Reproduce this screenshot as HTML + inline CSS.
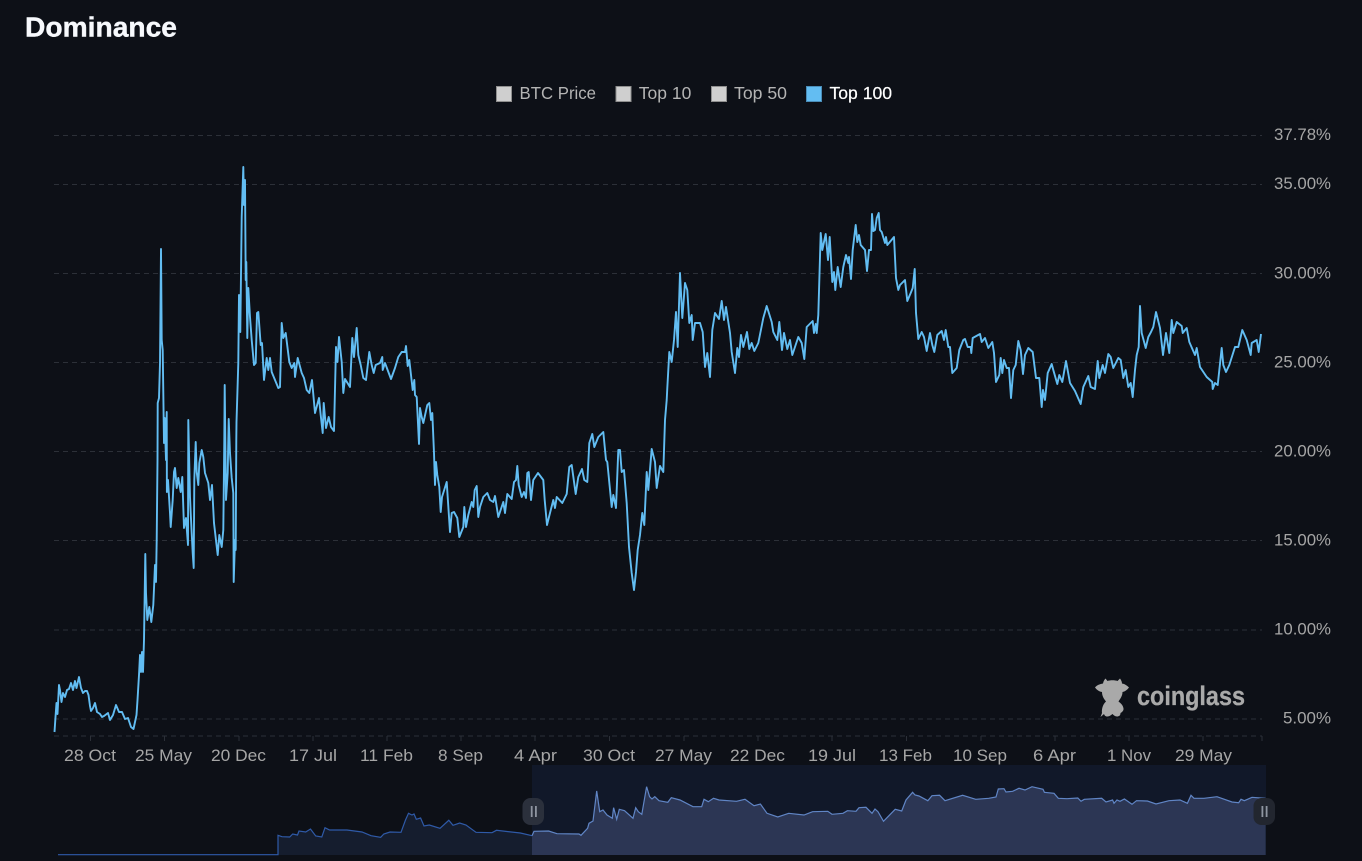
<!DOCTYPE html>
<html lang="en"><head><meta charset="utf-8"><title>Dominance</title>
<style>
html,body{margin:0;padding:0;background:#0d1017;width:1362px;height:861px;overflow:hidden}
svg{display:block}
text{font-family:"Liberation Sans",sans-serif}
</style></head><body>
<svg width="1362" height="861" viewBox="0 0 1362 861" xmlns="http://www.w3.org/2000/svg">
<rect width="1362" height="861" fill="#0d1017"/>
<text x="25" y="36.5" font-size="28" font-weight="700" fill="#f7f9fd" stroke="#f7f9fd" stroke-width=".4" textLength="152" lengthAdjust="spacingAndGlyphs">Dominance</text>

<!-- legend -->
<g stroke-width="1">
<rect x="496.5" y="86.5" width="15" height="15" fill="#cfcfcf" stroke="#8f8f8f"/>
<rect x="616" y="86.5" width="15" height="15" fill="#cfcfcf" stroke="#8f8f8f"/>
<rect x="711.5" y="86.5" width="15" height="15" fill="#cfcfcf" stroke="#8f8f8f"/>
<rect x="806.5" y="86.5" width="15" height="15" fill="#63bdf2" stroke="#4a8db8"/>
</g>
<g font-size="17.500">
<text x="519.5" y="99" fill="#b4b4b4" textLength="76.5" lengthAdjust="spacingAndGlyphs">BTC Price</text>
<text x="638.8" y="99" fill="#b4b4b4" textLength="52.5" lengthAdjust="spacingAndGlyphs">Top 10</text>
<text x="734" y="99" fill="#b4b4b4" textLength="53" lengthAdjust="spacingAndGlyphs">Top 50</text>
<text x="829.5" y="99" fill="#ffffff" stroke="#ffffff" stroke-width=".2" textLength="62.5" lengthAdjust="spacingAndGlyphs">Top 100</text>
</g>

<!-- grid -->
<g stroke="#2c3038" stroke-width="1" stroke-dasharray="5 4" fill="none">
<path d="M54 135.5H1262"/><path d="M54 184.5H1262"/><path d="M54 273.5H1262"/><path d="M54 362.5H1262"/>
<path d="M54 451.5H1262"/><path d="M54 540.5H1262"/><path d="M54 630H1262"/><path d="M54 719H1262"/><path d="M54 736H1262"/>
</g>
<g stroke="#2c3038" stroke-width="1">
<path d="M90.5 736v5M164.5 736v5M239 736v5M313 736v5M387 736v5M461 736v5M535 736v5M609.5 736v5M684 736v5M758 736v5M832 736v5M906.5 736v5M981 736v5M1055 736v5M1129 736v5M1203 736v5M1262 736v5"/>
</g>

<!-- y labels -->
<g font-size="17" fill="#a6a6a6">
<text x="1274" y="140" textLength="57" lengthAdjust="spacingAndGlyphs">37.78%</text>
<text x="1274" y="189" textLength="57" lengthAdjust="spacingAndGlyphs">35.00%</text>
<text x="1274" y="278.500" textLength="57" lengthAdjust="spacingAndGlyphs">30.00%</text>
<text x="1274" y="367.500" textLength="57" lengthAdjust="spacingAndGlyphs">25.00%</text>
<text x="1274" y="456.500" textLength="57" lengthAdjust="spacingAndGlyphs">20.00%</text>
<text x="1274" y="545.500" textLength="57" lengthAdjust="spacingAndGlyphs">15.00%</text>
<text x="1274" y="634.500" textLength="57" lengthAdjust="spacingAndGlyphs">10.00%</text>
<text x="1283" y="723.500" textLength="48" lengthAdjust="spacingAndGlyphs">5.00%</text>
</g>
<!-- x labels -->
<g font-size="17" fill="#a6a6a6">
<text x="64" y="761" textLength="52" lengthAdjust="spacingAndGlyphs">28 Oct</text>
<text x="135" y="761" textLength="57" lengthAdjust="spacingAndGlyphs">25 May</text>
<text x="211" y="761" textLength="55" lengthAdjust="spacingAndGlyphs">20 Dec</text>
<text x="289" y="761" textLength="48" lengthAdjust="spacingAndGlyphs">17 Jul</text>
<text x="360" y="761" textLength="53" lengthAdjust="spacingAndGlyphs">11 Feb</text>
<text x="438" y="761" textLength="45" lengthAdjust="spacingAndGlyphs">8 Sep</text>
<text x="514" y="761" textLength="43" lengthAdjust="spacingAndGlyphs">4 Apr</text>
<text x="583" y="761" textLength="52" lengthAdjust="spacingAndGlyphs">30 Oct</text>
<text x="655" y="761" textLength="57" lengthAdjust="spacingAndGlyphs">27 May</text>
<text x="730" y="761" textLength="55" lengthAdjust="spacingAndGlyphs">22 Dec</text>
<text x="808" y="761" textLength="48" lengthAdjust="spacingAndGlyphs">19 Jul</text>
<text x="879" y="761" textLength="53" lengthAdjust="spacingAndGlyphs">13 Feb</text>
<text x="953" y="761" textLength="54" lengthAdjust="spacingAndGlyphs">10 Sep</text>
<text x="1033" y="761" textLength="43" lengthAdjust="spacingAndGlyphs">6 Apr</text>
<text x="1107" y="761" textLength="44" lengthAdjust="spacingAndGlyphs">1 Nov</text>
<text x="1175" y="761" textLength="57" lengthAdjust="spacingAndGlyphs">29 May</text>
</g>

<!-- watermark -->
<path fill="#a9a9a9" d="M1095 687.500C1097 685 1100 684 1103 683.500C1103.500 681 1104.500 679.500 1105.500 678.500L1107.500 681C1110 680 1115 680 1117.500 681L1120 678.500C1121 680 1122 681.500 1122 683.500C1125 684 1127 685.500 1129 687.500C1127 690 1125 691.500 1122.500 692C1122.500 696 1120 699 1118.500 701.500C1120.500 703 1123 705 1123.500 708.500C1123.800 711 1121.500 712.500 1120.500 713C1120.500 715.500 1119 716.500 1117 716.500C1115 716.500 1113.500 715 1112.500 714C1111 715 1109.500 716.500 1107.500 716.500C1105.500 716.500 1104.500 715.500 1104 714L1100.500 717L1102 713C1101.500 710 1102.500 704.500 1106 701.500C1104 699 1102 696 1102 692C1099 691.500 1097 690 1095 687.500Z"/>
<text x="1137" y="705" font-size="26.500" font-weight="700" fill="#a9a9a9" stroke="#a9a9a9" stroke-width=".3" textLength="108" lengthAdjust="spacingAndGlyphs">coinglass</text>

<!-- main series -->
<polyline fill="none" stroke="#62bdf2" stroke-width="1.900" stroke-linejoin="round" points="54.500,732 55.500,717 56.500,703 57.500,714 59,685 60,690 61.500,702 63,693 65,697 67,690 69,689 71,683 73,690 75,681 76.500,688 79,677 81,688 83,693 85,691 87,691 88.500,695 90,706 91,711 93,708 95,703 97,712 100,714 102,717 104,716 108,713 110,720 113,715 116,705 119,712 122,712 125,719 128,718 131,727 133.500,729 136.500,715 137.500,700 139,675 140,655 141,672 142,652 143,672 144,640 145.300,554 146,593 147.300,620 149.300,607 151.300,622 153.300,605 155,565 156,582 156.700,540 157.500,460 157.700,403 159,398 160,363 161,249 161.700,340 162.700,350 163.300,392 164,443 164.700,418 166,460 166.700,412 166.900,492 168,480 170,513 170.700,527 172.700,500 174,472 175,468 176.700,488 178.300,478 180.700,492 182.300,477 184,528 186,518 188,545 188.300,420 190,497 190.700,513 192.700,553 193.700,568 194.300,480 195.700,442 196.700,472 198.300,485 199.300,463 201.700,450 203.300,457 205,473 208.300,483 210,500 212,485 214,523 217.700,555 219.300,535 221.700,547 223.300,530 224.300,440 224.700,385 226,500 227.700,473 228.700,419 230,453 231.700,478 233.300,493 233.700,582 235,540 235.700,550 236.300,440 236.500,422 238.300,363 239,295 240.300,332 241.700,217 243.300,167 244,205 245,180 245.700,280 246.300,262 247.300,338 248.300,288 250,317 251.700,340 254,365 255.700,363 257,313 258.300,312 260.700,345 262,343 264,380 266.700,358 268.300,370 270,358 271.700,372 275,380 278.300,388 280,387 281.700,323 283.300,338 285.700,333 289.300,362 291.700,368 294.300,363 295,377 297.700,358 301.700,373 304,378 306.700,390 309.300,393 312,380 315,413 319,398 320.700,415 322.700,433 323.700,403 326,428 328.700,417 331,427 334,431 336,347 337.500,362 339,337 341.700,362 343.300,393 345,379 350,387 352.300,338 354,357 356.700,328 358.300,355 360.700,365 363.300,378 366,380 369.300,352 371.700,365 373.700,373 375.700,365 380,363 382.300,357 382.700,370 385,363 391,379 395,368 398.300,357 401.700,352 405,352 406,346 407.700,366 409.300,360 412.700,390 414.300,380 415,395 416.700,397 419,444 420,408 421.700,417 423.300,423 427.300,405 429.300,403 431,420 432.300,413 434,453 435,485 436,462 437.300,475 439.300,487 440.700,512 442,497 446.700,482 450,532 451.700,513 454,512 457.300,518 459.300,537 463.300,527 464.300,507 466,527 468.300,515 471.700,502 473.300,507 474.700,490 476.700,486 478.300,517 480,507 483.300,497 487.300,493 490,500 493.300,502 495,496 498.300,517 503.300,502 505,513 507.300,494 511.700,499 514,482 516,480 517.300,466 518.700,485 521.700,497 524,492 526,498 527.300,473 528.700,472 531,500 533.300,480 538,473 543.300,480 544.700,500 547,525 550,513 553.300,500 555,508 556.700,497 562.300,503 566.700,494 569.300,467 571.700,465 575.700,494 578.300,477 582,469 584.300,480 587.300,482 589.300,443 592.300,434 594.300,447 598.300,437 603.300,432 606,460 607.300,462 611.700,507 613.300,495 616,508 618.300,450 620,450 621.700,472 624,470 626.700,503 629,547 631.700,573 634,590 636,572 637.700,550 640,535 642.300,513 644.300,525 646.700,472 648.300,490 651.700,449 655,462 656.700,488 660,466 663.300,472 665,420 666.700,400 667.300,388 669.300,352 671.700,362 674,340 676,312 677.700,347 680,273 682.300,318 685,283 687.300,290 689.300,323 691.700,315 692.700,340 695,323 700,323 702.700,332 705,367 707.300,353 710,377 712.300,330 715,313 719,319 721.700,301 724,320 726,307 730,333 731.700,352 735,373 737.300,348 739,357 741,335 743.300,347 747,332 749.300,349 751.700,343 754.300,351 758.300,343 763.300,318 766.700,306 771.700,322 773.300,332 777.300,340 779.300,322 782,350 784,333 787.300,349 790,340 792.300,355 798.300,337 801.700,343 804.300,359 806.700,327 812.700,321 814,333 815.700,324 816.700,333 818.300,315 820.700,233 822.300,250 825.700,234 828,260 829.700,237 832.300,282 834,272 835.300,290 837.700,267 840.700,287 843.300,267 846,255 848.300,263 849,257 851,279 852.700,250 855.700,225 857.300,242 859,235 860.700,245 865,250 867,271 869,250 871,250 872,214 873.300,231 875,230 876.700,218 878.700,213 880,230 881.700,232 885,243 886,237 887.300,245 894,237 896,278 898.300,290 900,285 905,280 907.300,301 910.700,293 912.700,288 914.700,269 916,313 918.300,339 921.700,332 924,337 926.700,351 930,333 932.300,345 934.300,352 937.300,335 941.700,331 944,340 945.700,330 948.300,347 950,347 952.300,373 956.700,368 959.300,350 963.300,340 965,339 967.700,347 970.700,347 971.300,353 972.700,338 980,334 981.700,342 985,338 988.300,348 992.300,342 994,353 996,382 999.300,375 1000.700,358 1002.300,373 1004,360 1006.700,368 1009,368 1011,398 1013.300,370 1015.700,365 1018.300,341 1020.700,350 1023,374 1025,355 1028.300,348 1032.700,352 1036,378 1039.300,378 1041.700,407 1043,390 1045,400 1047.700,373 1051.700,364 1053.300,370 1057.300,384 1059.300,375 1062.300,382 1066,361 1070,383 1075,391 1080.700,404 1083.300,387 1088.300,376 1090.700,387 1095,389 1097.700,361 1099.300,378 1102.700,365 1105,373 1108.300,354 1110.700,357 1113.300,368 1118.300,358 1120.700,360 1123.300,378 1125.700,370 1128.300,387 1130.700,383 1132.700,397 1135,370 1136.700,355 1138.700,347 1140,306 1141.700,333 1145.700,348 1148.300,337 1151,332 1153.300,327 1156,312 1160,328 1163,355 1166,333 1169.300,353 1171.700,320 1173.300,333 1176.700,322 1181.700,326 1182.700,333 1186.700,328 1189.300,342 1195,355 1196.700,348 1200,367 1206.700,377 1212.300,382 1212.700,389 1215,383 1217.700,385 1221.700,348 1223.300,365 1226,372 1229.300,365 1235,347 1238.300,347 1242.300,330 1246.700,340 1250.700,355 1251.700,343 1256.700,340 1258.700,352 1261,334"/>

<!-- navigator -->
<rect x="532" y="765" width="734" height="90" fill="#111829"/>
<polygon fill="#151d2e" points="278,855 278,835.300 282,836.700 289.700,837 292.700,834 297.500,835 299,831 305.700,832 310.500,829 315.700,836 321.800,837 325,827.700 329.600,830 347,830 362,832 371,835.700 380.700,837.300 383.800,834 390,832 401,832.300 405.500,820 408.500,813.300 412,815 414,814 416.300,819.300 420.600,818 424,826 429.300,825 440,828.300 448.800,820.300 453,825.300 459.700,823 466,825 476,832.300 492,832.700 496.500,830.300 520.400,833 532,835.700 532,855"/>
<polyline fill="none" stroke="#2f5aa8" stroke-width="1.200" points="58,854.700 278,854.700 278,835.300 282,836.700 289.700,837 292.700,834 297.500,835 299,831 305.700,832 310.500,829 315.700,836 321.800,837 325,827.700 329.600,830 347,830 362,832 371,835.700 380.700,837.300 383.800,834 390,832 401,832.300 405.500,820 408.500,813.300 412,815 414,814 416.300,819.300 420.600,818 424,826 429.300,825 440,828.300 448.800,820.300 453,825.300 459.700,823 466,825 476,832.300 492,832.700 496.500,830.300 520.400,833 532,835.700"/>
<polygon fill="#2c3654" points="532,855 532,835.700 534,831.300 548.600,831 557,833.700 579,834 581,835.300 587.600,828.300 589,823.300 593,821 596.700,791 599.700,811.700 603,810 607,815 612.300,818.300 613.600,807.700 616.700,819.300 619.300,809.300 624.500,810.700 633,818.300 635.700,807.700 638.300,811.700 641.800,814.300 646.600,786.700 649.600,796.700 652,799 654.800,796.700 659,800.700 667.800,802.300 671.300,797.700 680,800 693,806.700 701.700,806.700 704,799.300 708.300,801.700 713.500,798.300 719,800 736.500,801.300 745,799.300 754,805.700 760.400,804 767,813.300 777.800,817 788.700,813.300 804,815 812.600,811.700 827.800,811.300 832,814.300 843,813.300 847.400,810.700 856,811.300 859,807.700 866,807.300 872,813.300 875,809 878,811.700 883.500,821.300 895.200,809.300 901.700,811 906,800 912.600,792.300 915,795 919,796 927.800,800.700 932,795.700 939.600,795.300 945,800.700 962.600,795.300 975.700,799.300 988.700,798.300 996,797 998.300,789 1004,788.700 1006,792 1012.600,791.300 1019,788.300 1025,790 1032,786.700 1043,789.300 1044.400,792.300 1054,793.300 1058.300,798.300 1067,798.700 1077.800,798 1081,801.300 1084.300,799.300 1101.700,798.300 1106,802 1112.600,800 1114,803.300 1117,800 1120,801.300 1124.400,799 1132,804.300 1136.500,800.700 1147.400,801 1156,804 1169,800.700 1180,800 1187.400,803.300 1191,795.300 1194,798.300 1204,798.300 1217,796.700 1232,802 1238.700,802.700 1241,799.300 1244.300,800.700 1252,797.300 1265.600,798.300 1265.600,855"/>
<polyline fill="none" stroke="#6085c5" stroke-width="1.200" points="532,835.700 534,831.300 548.600,831 557,833.700 579,834 581,835.300 587.600,828.300 589,823.300 593,821 596.700,791 599.700,811.700 603,810 607,815 612.300,818.300 613.600,807.700 616.700,819.300 619.300,809.300 624.500,810.700 633,818.300 635.700,807.700 638.300,811.700 641.800,814.300 646.600,786.700 649.600,796.700 652,799 654.800,796.700 659,800.700 667.800,802.300 671.300,797.700 680,800 693,806.700 701.700,806.700 704,799.300 708.300,801.700 713.500,798.300 719,800 736.500,801.300 745,799.300 754,805.700 760.400,804 767,813.300 777.800,817 788.700,813.300 804,815 812.600,811.700 827.800,811.300 832,814.300 843,813.300 847.400,810.700 856,811.300 859,807.700 866,807.300 872,813.300 875,809 878,811.700 883.500,821.300 895.200,809.300 901.700,811 906,800 912.600,792.300 915,795 919,796 927.800,800.700 932,795.700 939.600,795.300 945,800.700 962.600,795.300 975.700,799.300 988.700,798.300 996,797 998.300,789 1004,788.700 1006,792 1012.600,791.300 1019,788.300 1025,790 1032,786.700 1043,789.300 1044.400,792.300 1054,793.300 1058.300,798.300 1067,798.700 1077.800,798 1081,801.300 1084.300,799.300 1101.700,798.300 1106,802 1112.600,800 1114,803.300 1117,800 1120,801.300 1124.400,799 1132,804.300 1136.500,800.700 1147.400,801 1156,804 1169,800.700 1180,800 1187.400,803.300 1191,795.300 1194,798.300 1204,798.300 1217,796.700 1232,802 1238.700,802.700 1241,799.300 1244.300,800.700 1252,797.300 1265.600,798.300"/>
<!-- handles -->
<rect x="522.500" y="798" width="21.500" height="27" rx="8" fill="#2b303c"/>
<rect x="530.800" y="806" width="1.800" height="11" fill="#8f95a1"/><rect x="535" y="806" width="1.800" height="11" fill="#8f95a1"/>
<rect x="1253.500" y="798" width="21.500" height="27" rx="8" fill="#22262f"/>
<rect x="1261.500" y="806" width="1.800" height="11" fill="#8f95a1"/><rect x="1265.700" y="806" width="1.800" height="11" fill="#8f95a1"/>
</svg>
</body></html>
